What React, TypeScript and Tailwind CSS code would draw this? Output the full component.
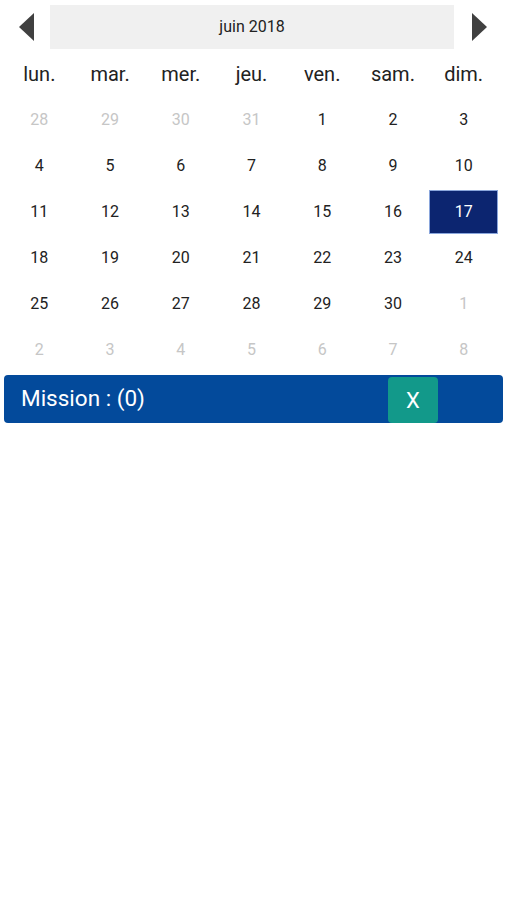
const weekDays = ["lun.", "mar.", "mer.", "jeu.", "ven.", "sam.", "dim."];

const days: { n: number; out?: boolean }[] = [
  { n: 28, out: true }, { n: 29, out: true }, { n: 30, out: true }, { n: 31, out: true },
  ...Array.from({ length: 30 }, (_, i) => ({ n: i + 1 })),
  { n: 1, out: true }, { n: 2, out: true }, { n: 3, out: true }, { n: 4, out: true },
  { n: 5, out: true }, { n: 6, out: true }, { n: 7, out: true }, { n: 8, out: true },
];

const App = () => {
  return (
    <div className="bg-white min-h-screen w-[507px] font-['Roboto',sans-serif]">
      <div className="flex items-center pt-[5px]">
        <div className="w-[50px] flex justify-center">
          <svg width="16" height="28" viewBox="0 0 16 28" className="ml-[4px]">
            <path d="M15 0 L0 14 L15 28 Z" fill="#404040" />
          </svg>
        </div>
        <div className="w-[404px] h-[44px] bg-[#f0f0f0] flex items-center justify-center text-[16px] text-[#222]">
          juin 2018
        </div>
        <div className="flex-1 flex justify-center">
          <svg width="16" height="28" viewBox="0 0 16 28" className="mr-[3px]">
            <path d="M1 0 L16 14 L1 28 Z" fill="#404040" />
          </svg>
        </div>
      </div>

      <div className="ml-[4px] mt-[1px] w-[495px] grid grid-cols-7">
        {weekDays.map((d) => (
          <div key={d} className="h-[47px] flex items-center justify-center text-[20px] text-[#222]">
            {d}
          </div>
        ))}
        {days.map((d, i) => {
          const selected = !d.out && d.n === 17;
          return (
            <div key={i} className="h-[46px] flex items-center justify-center p-[1px]">
              {selected ? (
                <div className="w-full h-full bg-[#0c2570] border border-[#8aa6dc] flex items-center justify-center text-white text-[16px]">
                  {d.n}
                </div>
              ) : (
                <span className={`text-[16px] ${d.out ? "text-[#c6c6c6]" : "text-[#222]"}`}>{d.n}</span>
              )}
            </div>
          );
        })}
      </div>

      <div className="mx-1 mt-[2px] h-[48px] bg-[#034a9b] rounded-[4px] flex items-center relative">
        <span className="ml-[17px] text-white text-[22.5px]">Mission : (0)</span>
        <div className="absolute left-[384px] top-[2px] w-[50px] h-[46px] bg-[#12998a] rounded-[4px] flex items-center justify-center text-white text-[22px]">
          X
        </div>
      </div>
    </div>
  );
};

export default App;
